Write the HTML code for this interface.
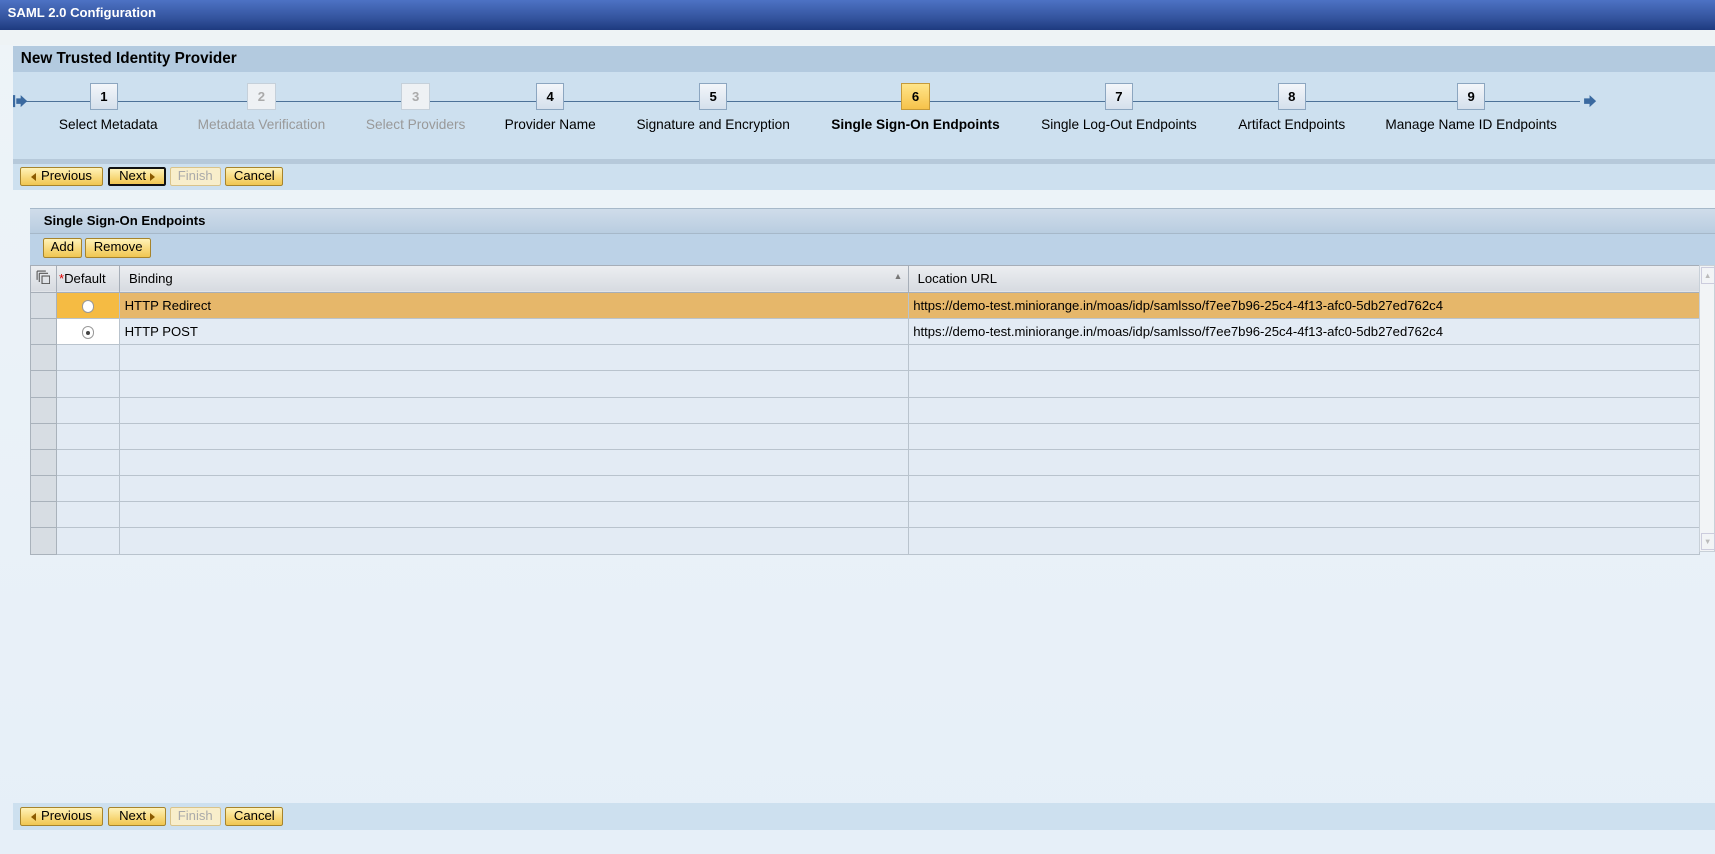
<!DOCTYPE html>
<html><head><meta charset="utf-8"><style>
html,body{margin:0;padding:0;width:1715px;height:854px;overflow:hidden;background:#e9f1f8;}
#w{zoom:1.09375;width:1568px;height:781px;position:relative;font-family:"Liberation Sans",Arial,sans-serif;font-size:12px;color:#000;background:linear-gradient(#eef4f8,#e6eff8);}
.abs{position:absolute;}
.title{left:0;top:0;width:1568px;height:27px;background:linear-gradient(#4d72c4,#34549e 60%,#1e3a7f);color:#fff;font-weight:bold;font-size:12px;line-height:24px;padding-left:7px;box-sizing:border-box;}
.band{left:0;top:27px;width:1568px;height:14px;background:#eef3f5;}
.ph{left:12px;top:42px;width:1556px;height:24px;background:#b3cadf;font-weight:bold;font-size:14px;line-height:23px;padding-left:7px;box-sizing:border-box;}
.rm{left:12px;top:66px;width:1556px;height:79px;background:#cde0ef;}
.sep{left:12px;top:145px;width:1556px;height:5px;background:#b6c9da;}
.tb{left:12px;width:1556px;height:24px;background:#cde0ef;}
.line{left:24px;top:92px;width:1421px;height:1px;background:#4d7298;}
.box{width:26px;height:25px;top:76px;border:1px solid #8ca6c0;background:linear-gradient(#f3f6fa,#d5e0ec);box-sizing:border-box;text-align:center;font-weight:bold;font-size:12px;line-height:23px;}
.box.dis{color:#aaa;background:#eef1f4;border-color:#c5d0da;}
.box.cur{background:linear-gradient(#ffe58a,#f6c24a);border-color:#c59a3a;}
.lbl{top:107px;white-space:nowrap;font-size:12.5px;transform:translateX(-50%);}
.lbl.dis{color:#999;}
.btn{height:17px;border:1px solid #a7842c;border-radius:2px;background:linear-gradient(#fff2b8,#f7d778 60%,#f0c652);box-sizing:border-box;font-size:12px;line-height:15px;text-align:center;}
.btn.dis{background:#f8eecb;color:#aaa;border-color:#d9c38a;}
.tri{display:inline-block;width:0;height:0;border-top:4px solid transparent;border-bottom:4px solid transparent;vertical-align:-1px;}
.tl{border-right:5px solid #8a5a00;margin-right:5px;}
.tr{border-left:5px solid #8a5a00;margin-left:4px;}
.sec{left:27px;top:190px;width:1541px;height:23px;background:linear-gradient(#cfdcea,#b9cde0);border-top:1px solid #a6b8c9;box-sizing:border-box;font-weight:bold;font-size:12px;line-height:22px;padding-left:13px;}
.stb{left:27px;top:213px;width:1541px;height:29px;background:#bcd2e7;border-top:1px solid #a6b8c9;box-sizing:border-box;}
.grid{left:27px;top:242px;width:1526px;border-collapse:collapse;table-layout:fixed;}
.grid td{border:1px solid #b9c3cd;height:23px;padding:0 0 0 4px;font-size:12px;white-space:nowrap;overflow:hidden;background:#e3ebf4;}
.grid tr.h td{background:linear-gradient(#eceef1,#d6dae0);height:24px;border-color:#a6aeb8;}
.grid td.s{background:#d7dde3;border-color:#a9b2bb;}
.grid tr.sel td{background:#e6b76a;}
.grid tr.sel td.s{background:#d7dde3;}
.grid tr.sel td.d{background:#f5bb43;}
.grid td.d{background:#fff;text-align:center;padding:0;}
.grid tr.e td.d{background:#e3ebf4;}
.rad{display:inline-block;width:10px;height:10px;border-radius:50%;border:1px solid #999;background:#fff;vertical-align:middle;position:relative;}
.rad.on::after{content:"";position:absolute;left:3px;top:3px;width:4px;height:4px;border-radius:50%;background:#444;}
.sb{left:1553px;top:242px;width:15px;height:263px;background:#f2f4f6;border:1px solid #c8d0d8;box-sizing:border-box;}
</style></head><body><div id="w">
<div class="abs title">SAML 2.0 Configuration</div>
<div class="abs band"></div>
<div class="abs ph">New Trusted Identity Provider</div>
<div class="abs rm"></div>
<div class="abs line"></div>
<svg class="abs" style="left:12px;top:86px" width="14" height="14"><rect x="0" y="1" width="2" height="11" fill="#3b6aa0"/><path d="M3 4h4V1l6 5.5-6 5.5V9H3z" fill="#3b6aa0"/></svg>
<svg class="abs" style="left:1447px;top:86px" width="14" height="14"><path d="M1 4h5V1l6 5.5-6 5.5V9H1z" fill="#3b6aa0"/></svg>
<div class="abs box" style="left:82px">1</div><div class="abs lbl" style="left:99px">Select Metadata</div>
<div class="abs box dis" style="left:226px">2</div><div class="abs lbl dis" style="left:239px">Metadata Verification</div>
<div class="abs box dis" style="left:367px">3</div><div class="abs lbl dis" style="left:380px">Select Providers</div>
<div class="abs box" style="left:490px">4</div><div class="abs lbl" style="left:503px">Provider Name</div>
<div class="abs box" style="left:639px">5</div><div class="abs lbl" style="left:652px">Signature and Encryption</div>
<div class="abs box cur" style="left:824px">6</div><div class="abs lbl" style="left:837px;font-weight:bold">Single Sign-On Endpoints</div>
<div class="abs box" style="left:1010px">7</div><div class="abs lbl" style="left:1023px">Single Log-Out Endpoints</div>
<div class="abs box" style="left:1168px">8</div><div class="abs lbl" style="left:1181px">Artifact Endpoints</div>
<div class="abs box" style="left:1332px">9</div><div class="abs lbl" style="left:1345px">Manage Name ID Endpoints</div>
<div class="abs sep"></div>
<div class="abs tb" style="top:150px"></div>
<div class="abs btn" style="left:18px;top:153px;width:76px"><span class="tri tl"></span>Previous</div>
<div class="abs btn" style="left:99px;top:153px;width:53px;border:2px solid #111;line-height:13px">Next<span class="tri tr"></span></div>
<div class="abs btn dis" style="left:155px;top:153px;width:47px">Finish</div>
<div class="abs btn" style="left:206px;top:153px;width:53px">Cancel</div>
<div class="abs sec">Single Sign-On Endpoints</div>
<div class="abs stb"></div>
<div class="abs btn" style="left:39px;top:218px;width:36px;height:18px">Add</div>
<div class="abs btn" style="left:78px;top:218px;width:60px;height:18px">Remove</div>
<table class="abs grid">
<colgroup><col style="width:24px"><col style="width:58px"><col style="width:721px"><col style="width:723px"></colgroup>
<tr class="h"><td class="s" style="padding:0 0 0 5px"><svg width="13" height="13"><path d="M1 1h8M1 1v8M3 3h8M3 3v8" stroke="#555" fill="none"/><rect x="5.5" y="5.5" width="7" height="7" fill="none" stroke="#555"/></svg></td><td style="padding-left:2px"><span style="color:#d00">*</span>Default</td><td style="padding-left:8px">Binding<span style="float:right;margin-right:5px;font-size:8px;color:#777">▲</span></td><td style="padding-left:8px">Location URL</td></tr>
<tr class="sel"><td class="s"></td><td class="d"><span class="rad"></span></td><td>HTTP Redirect</td><td>https://demo-test.miniorange.in/moas/idp/samlsso/f7ee7b96-25c4-4f13-afc0-5db27ed762c4</td></tr>
<tr><td class="s"></td><td class="d"><span class="rad on"></span></td><td>HTTP POST</td><td>https://demo-test.miniorange.in/moas/idp/samlsso/f7ee7b96-25c4-4f13-afc0-5db27ed762c4</td></tr>
<tr class="e"><td class="s"></td><td class="d"></td><td></td><td></td></tr>
<tr class="e"><td class="s"></td><td class="d"></td><td></td><td></td></tr>
<tr class="e"><td class="s"></td><td class="d"></td><td></td><td></td></tr>
<tr class="e"><td class="s"></td><td class="d"></td><td></td><td></td></tr>
<tr class="e"><td class="s"></td><td class="d"></td><td></td><td></td></tr>
<tr class="e"><td class="s"></td><td class="d"></td><td></td><td></td></tr>
<tr class="e"><td class="s"></td><td class="d"></td><td></td><td></td></tr>
<tr class="e"><td class="s"></td><td class="d"></td><td></td><td></td></tr>
</table>
<div class="abs sb"><div style="position:absolute;left:1px;top:1px;width:11px;height:14px;border:1px solid #ccd;font-size:7px;color:#bbb;text-align:center;line-height:14px">▲</div><div style="position:absolute;left:1px;bottom:1px;width:11px;height:14px;border:1px solid #ccd;font-size:7px;color:#bbb;text-align:center;line-height:14px">▼</div></div>
<div class="abs tb" style="top:734px;height:25px"></div>
<div class="abs btn" style="left:18px;top:738px;width:76px"><span class="tri tl"></span>Previous</div>
<div class="abs btn" style="left:99px;top:738px;width:53px">Next<span class="tri tr"></span></div>
<div class="abs btn dis" style="left:155px;top:738px;width:47px">Finish</div>
<div class="abs btn" style="left:206px;top:738px;width:53px">Cancel</div>
</div></body></html>
